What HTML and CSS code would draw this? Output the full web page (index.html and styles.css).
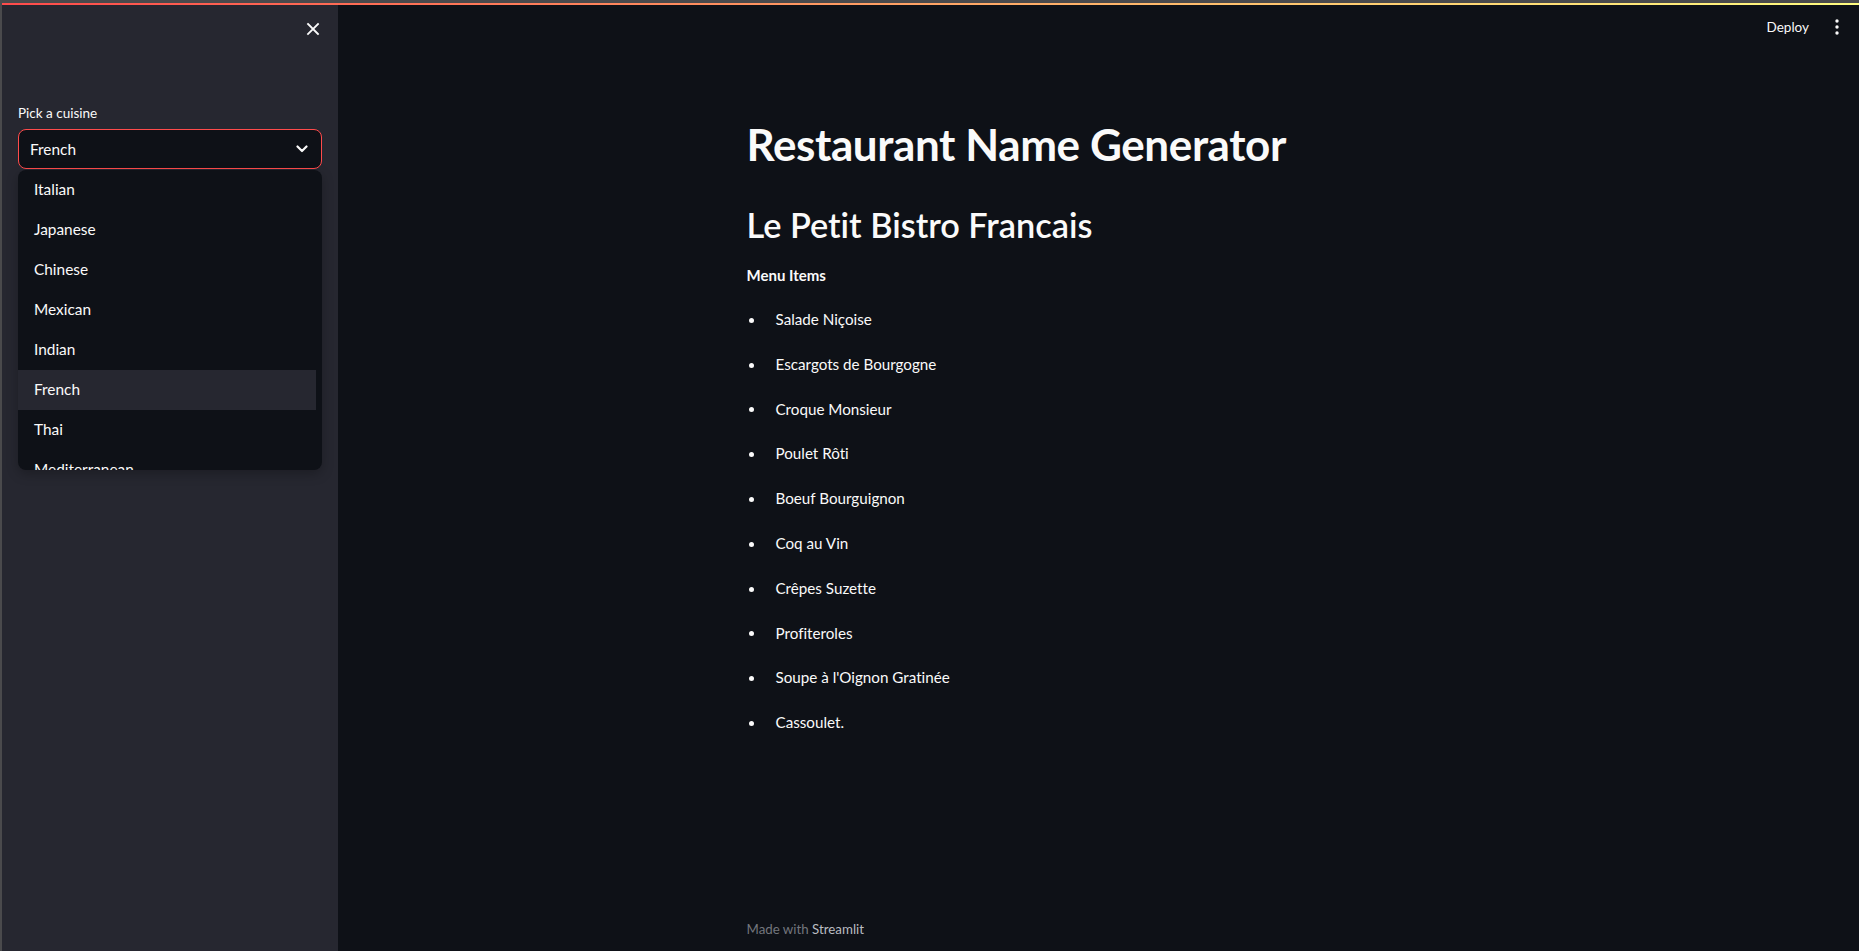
FILE: index.html
```html
<!DOCTYPE html>
<html lang="en">
<head>
<meta charset="utf-8">
<title>Restaurant Name Generator</title>
<link rel="stylesheet" href="styles.css">
</head>
<body>
<div class="window">
  <div class="decoration"></div>
  <div class="app">
    <aside class="sidebar">
      <div class="sidebar-top">
        <button class="close-btn" aria-label="Close sidebar">
          <svg width="14" height="14" viewBox="0 0 14 14"><path d="M2 2 L12 12 M12 2 L2 12" stroke="#fafafa" stroke-width="1.8" stroke-linecap="square" fill="none"/></svg>
        </button>
      </div>
      <div class="widget">
        <label class="widget-label">Pick a cuisine</label>
        <div class="select-wrap">
          <div class="select">
            <span class="select-value">French</span>
            <svg class="chevron" width="12" height="8" viewBox="0 0 12 8"><path d="M1.5 1.5 L6 6 L10.5 1.5" stroke="#fafafa" stroke-width="2.2" fill="none" stroke-linecap="round" stroke-linejoin="round"/></svg>
          </div>
          <ul class="dropdown">
            <li class="option">Italian</li>
            <li class="option">Japanese</li>
            <li class="option">Chinese</li>
            <li class="option">Mexican</li>
            <li class="option">Indian</li>
            <li class="option selected">French</li>
            <li class="option">Thai</li>
            <li class="option">Mediterranean</li>
          </ul>
        </div>
      </div>
    </aside>
    <main class="main">
      <header class="toolbar">
        <button class="deploy">Deploy</button>
        <button class="menu-btn" aria-label="Main menu">
          <svg width="4" height="16" viewBox="0 0 4 16"><circle cx="2" cy="2" r="1.7" fill="#fafafa"/><circle cx="2" cy="8" r="1.7" fill="#fafafa"/><circle cx="2" cy="14" r="1.7" fill="#fafafa"/></svg>
        </button>
      </header>
      <section class="content">
        <h1 class="title">Restaurant Name Generator</h1>
        <h2 class="subtitle">Le Petit Bistro Francais</h2>
        <p class="menu-heading">Menu Items</p>
        <ul class="menu-list">
          <li>Salade Niçoise</li>
          <li>Escargots de Bourgogne</li>
          <li>Croque Monsieur</li>
          <li>Poulet Rôti</li>
          <li>Boeuf Bourguignon</li>
          <li>Coq au Vin</li>
          <li>Crêpes Suzette</li>
          <li>Profiteroles</li>
          <li>Soupe à l'Oignon Gratinée</li>
          <li>Cassoulet.</li>
        </ul>
      </section>
      <footer class="footer">
        <span class="footer-muted">Made with</span> <span class="footer-link">Streamlit</span>
      </footer>
    </main>
  </div>
</div>
</body>
</html>
```

FILE: styles.css
```css
* { box-sizing: border-box; }

html, body {
  margin: 0;
  padding: 0;
  height: 100%;
  overflow: hidden;
}

body {
  background: #4a4a4c;
  font-family: "Lato", "Noto Sans", sans-serif;
  font-variant-ligatures: no-common-ligatures;
  color: #fafafa;
}

.window {
  height: 951px;
  padding-top: 3px;
  padding-left: 2px;
  display: flex;
  flex-direction: column;
}

.decoration {
  height: 2px;
  flex: none;
  background: linear-gradient(90deg, #ff4b4b, #fffd80);
}

.app {
  flex: 1;
  display: flex;
  min-height: 0;
}

/* Sidebar */
.sidebar {
  width: 336px;
  flex: none;
  background: #262730;
  padding: 0 16px 0 16px;
}

.sidebar-top {
  height: 48px;
  display: flex;
  justify-content: flex-end;
  align-items: center;
}

.close-btn {
  background: none;
  border: none;
  padding: 0;
  width: 24px;
  height: 24px;
  display: flex;
  align-items: center;
  justify-content: center;
  margin-right: -3px;
}

.widget {
  margin-top: 50px;
}

.widget-label {
  display: block;
  font-size: 13.5px;
  line-height: 20px;
  color: #fafafa;
  margin-bottom: 6px;
}

.select-wrap {
  position: relative;
}

.select {
  height: 40px;
  border: 1px solid #ff4b4b;
  border-radius: 8px;
  background: #0e1117;
  display: flex;
  align-items: center;
  justify-content: space-between;
  padding: 0 13px 0 11px;
}

.select-value {
  font-size: 15.4px;
}

.chevron { display: block; }

.dropdown {
  position: absolute;
  left: 0;
  right: 0;
  top: 41px;
  height: 300px;
  margin: 0;
  padding: 0 6px 0 0;
  list-style: none;
  background: #0e1117;
  border-radius: 8px;
  overflow: hidden;
  box-shadow: 0 4px 12px rgba(0,0,0,0.25);
  z-index: 10;
}

.option {
  height: 40px;
  display: flex;
  align-items: center;
  padding: 0 0 2px 16px;
  font-size: 15.4px;
  color: #fafafa;
}

.option.selected {
  background: #262730;
}

/* Main */
.main {
  flex: 1;
  background: #0e1117;
  display: flex;
  flex-direction: column;
  min-width: 0;
}

.toolbar {
  height: 44px;
  flex: none;
  display: flex;
  justify-content: flex-end;
  align-items: center;
  gap: 8px;
  padding-right: 10px;
}

.deploy {
  background: none;
  border: none;
  color: #fafafa;
  font-family: inherit;
  font-size: 13.5px;
  padding: 4px 8px;
}

.menu-btn {
  background: none;
  border: none;
  width: 24px;
  height: 24px;
  display: flex;
  align-items: center;
  justify-content: center;
  padding: 0;
}

.content {
  width: 704px;
  margin: 0 auto;
  padding-top: 69px;
}

.title {
  margin: 0;
  font-size: 44px;
  line-height: 52px;
  font-weight: 700;
  letter-spacing: -0.4px;
}

.subtitle {
  margin: 33px 0 0 0;
  font-size: 34.3px;
  line-height: 44px;
  font-weight: 600;
}

.menu-heading {
  margin: 16px 0 0 0;
  font-size: 15px;
  line-height: 24px;
  font-weight: 700;
}

.menu-list {
  margin: 10px 0 0 0;
  padding: 0 0 0 2px;
  list-style: none;
}

.menu-list li {
  display: flex;
  align-items: center;
  font-size: 15.2px;
  line-height: 24.8px;
  padding: 10px 0;
}

.menu-list li::before {
  content: "";
  flex: none;
  width: 5px;
  height: 5px;
  border-radius: 50%;
  background: #fafafa;
  margin-right: 22px;
  margin-top: 2px;
}

.footer {
  margin-top: auto;
  width: 704px;
  margin-left: auto;
  margin-right: auto;
  padding-bottom: 12px;
  font-size: 13.3px;
  line-height: 20px;
}

.footer-muted { color: #73767d; }
.footer-link { color: #b9bcc1; }
```
